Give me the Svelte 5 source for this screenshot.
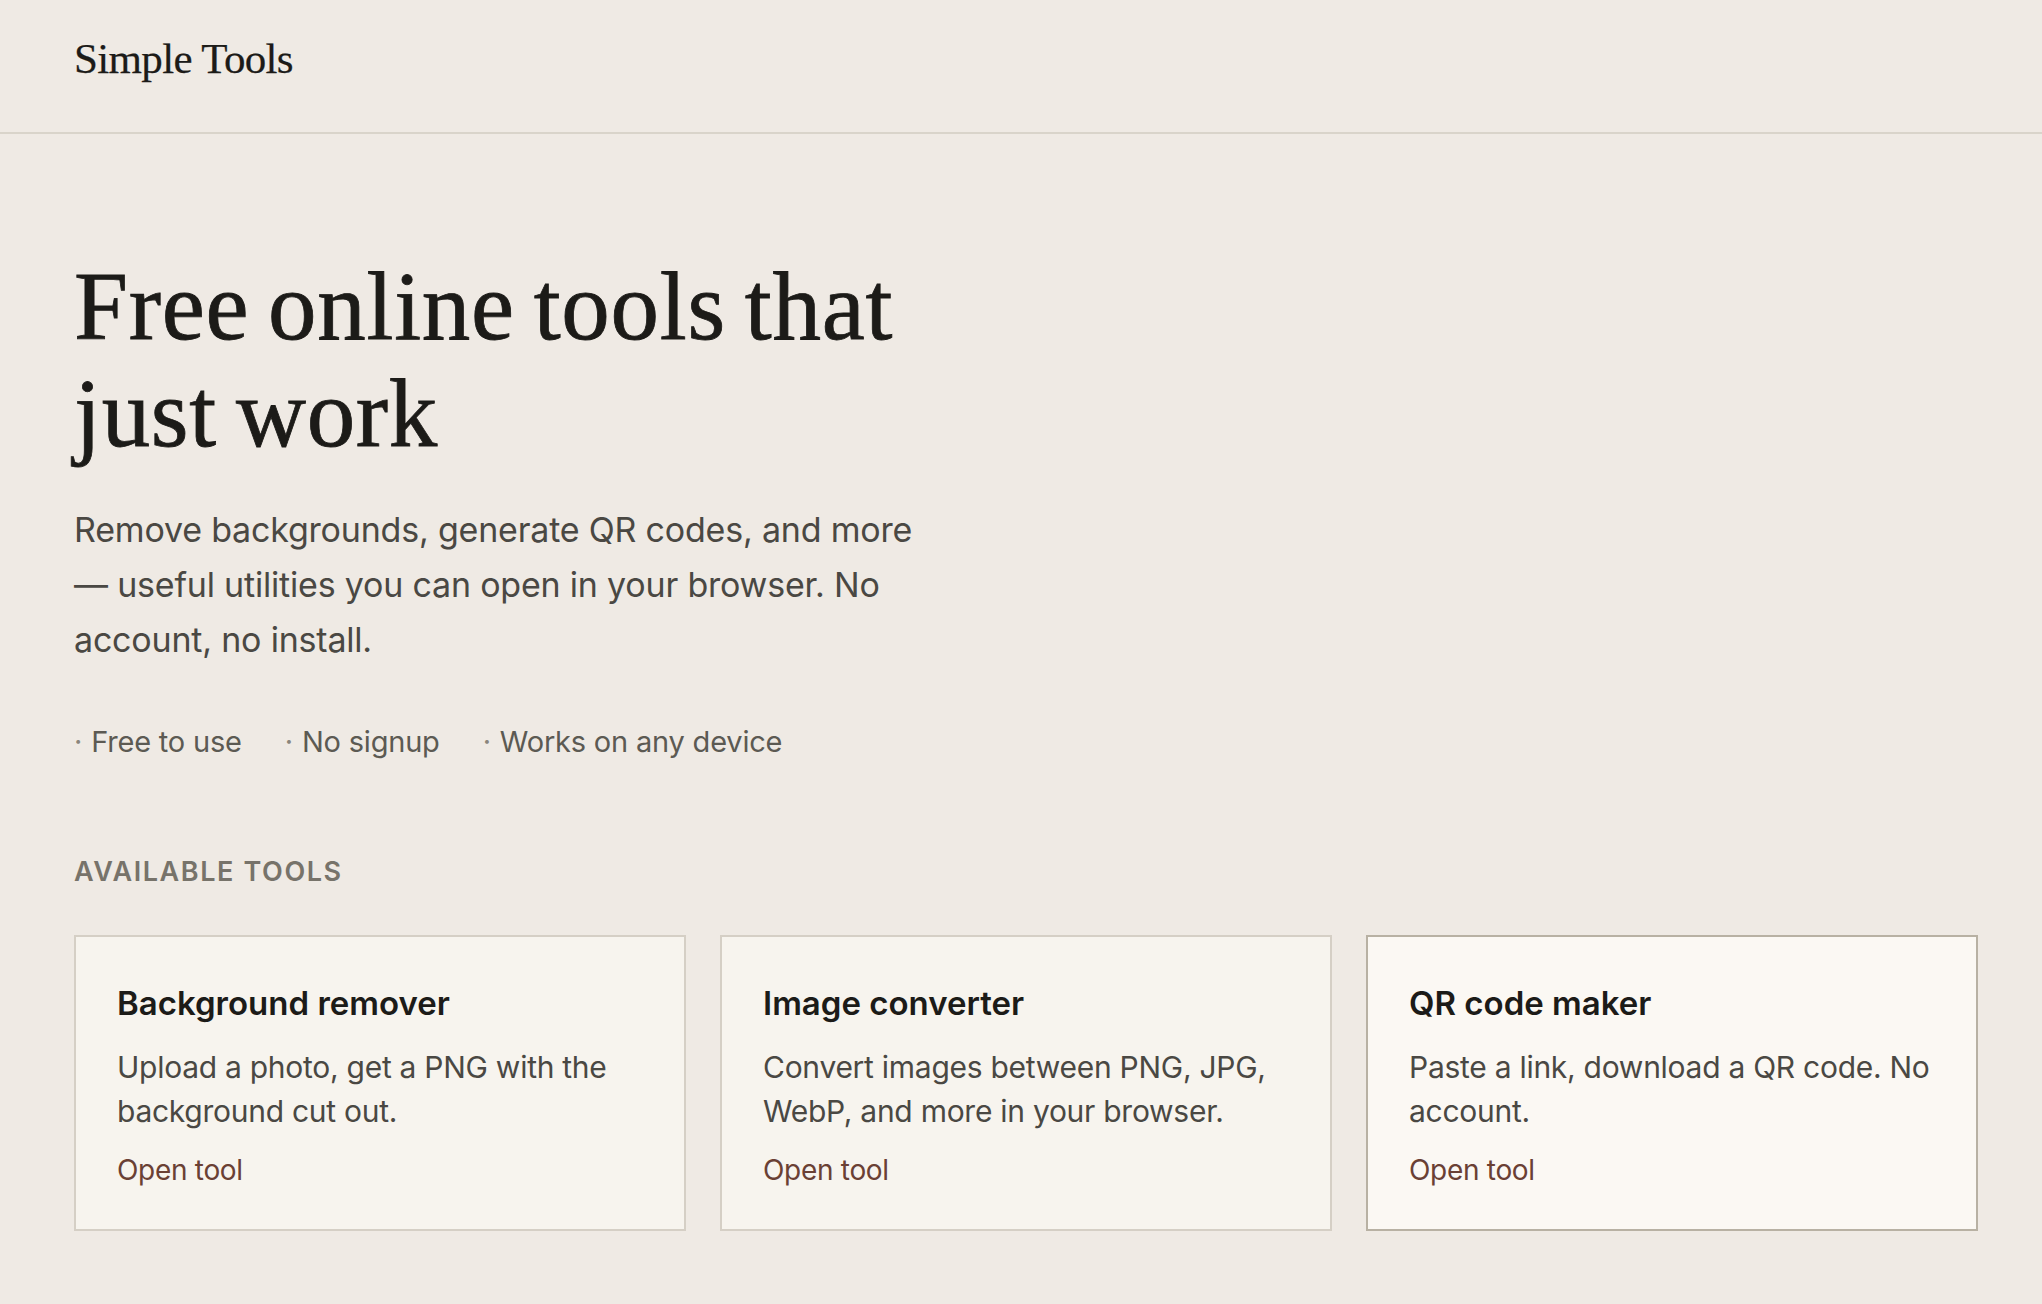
<script>
  const chips = ['Free to use', 'No signup', 'Works on any device'];
  const tools = [
    { name: 'Background remover', text: 'Upload a photo, get a PNG with the background cut out.' },
    { name: 'Image converter', text: 'Convert images between PNG, JPG, WebP, and more in your browser.' },
    { name: 'QR code maker', text: 'Paste a link, download a QR code. No account.', active: true }
  ];
</script>

<div class="page">
  <header class="top"><a class="logo" href="#home">Simple Tools</a></header>
  <main class="main">
    <h1>Free online tools that just work</h1>
    <p class="lead">Remove backgrounds, generate QR codes, and more — useful utilities you can open in your browser. No account, no install.</p>
    <ul class="chips">
      {#each chips as chip}
        <li><span class="dot">·</span>{chip}</li>
      {/each}
    </ul>
    <h2>Available tools</h2>
    <div class="grid">
      {#each tools as tool}
        <a class="card" class:active={tool.active} href="#tool">
          <h3>{tool.name}</h3>
          <p>{tool.text}</p>
          <span class="open">Open tool</span>
        </a>
      {/each}
    </div>
  </main>
</div>

<style>
  :global(body) {
    margin: 0;
    background: #efeae4;
    font-family: Inter, "Liberation Sans", sans-serif;
    color: #1c1b18;
  }
  .page { min-height: 1304px; }
  .top {
    height: 132px;
    border-bottom: 2px solid #d9d4ca;
    padding: 0 74px;
    display: flex;
    align-items: center;
  }
  .logo {
    font-family: "Liberation Serif", serif;
    font-size: 43px;
    color: #1c1b18;
    text-decoration: none;
    letter-spacing: -0.65px;
    margin-top: -16px;
    -webkit-text-stroke: 0.25px #1c1b18;
  }
  .main { padding: 119px 64px 0 74px; }
  h1 {
    font-family: "Liberation Serif", serif;
    font-weight: 400;
    font-size: 97px;
    line-height: 107px;
    letter-spacing: 0.7px;
    word-spacing: -6px;
    margin: 0;
    max-width: 900px;
    -webkit-text-stroke: 0.8px #1c1b18;
  }
  .lead {
    font-size: 34px;
    line-height: 55px;
    letter-spacing: -0.2px;
    color: #4a4843;
    margin: 35px 0 0;
    max-width: 860px;
  }
  .chips {
    list-style: none;
    display: flex;
    gap: 43px;
    margin: 53px 0 0;
    padding: 0;
    font-size: 29px;
    line-height: 44px;
    letter-spacing: -0.2px;
    color: #5c5a53;
  }
  .dot { color: #8a867c; margin-right: 9px; }
  h2 {
    font-size: 27px;
    line-height: 40px;
    font-weight: 600;
    letter-spacing: 1.6px;
    text-transform: uppercase;
    color: #77736a;
    margin: 88px 0 0;
  }
  .grid {
    display: grid;
    grid-template-columns: repeat(3, 1fr);
    gap: 34px;
    margin-top: 43px;
  }
  .card {
    display: block;
    background: #f7f4ee;
    border: 2px solid #d5cfc5;
    padding: 44px 41px 40px;
    height: 296px;
    box-sizing: border-box;
    text-decoration: none;
    color: inherit;
  }
  .card.active { background: #fbf8f3; border-color: #b8b1a3; }
  h3 { font-size: 33px; line-height: 44px; font-weight: 600; margin: 0; }
  .card p { font-size: 30px; line-height: 44px; letter-spacing: -0.27px; color: #4a4843; margin: 20px 0 0; }
  .open { display: block; font-size: 28px; line-height: 40px; letter-spacing: -0.3px; color: #6a4034; margin-top: 17px; }
</style>
